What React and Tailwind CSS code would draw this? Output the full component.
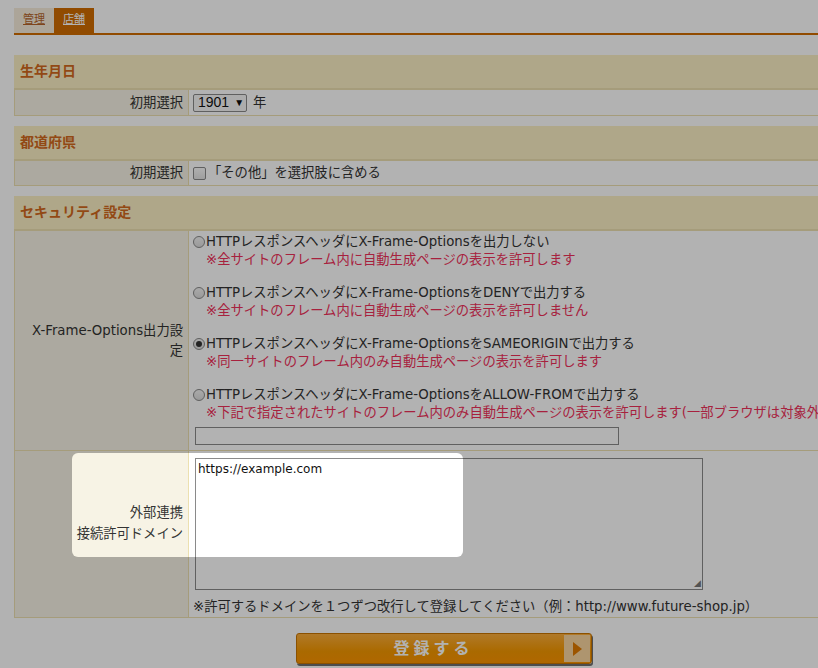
import React from "react";

const hatch =
  "bg-[conic-gradient(#efe9d6_25%,#fefcf4_0_50%,#efe9d6_0_75%,#fefcf4_0)] bg-[length:2px_2px]";

function Section({ title, children }) {
  return (
    <div className="mb-[10px]">
      <div className="h-[34px] bg-[#fbf0c4] border-b border-[#ece0b0] flex items-center pl-[6px] text-[14px] font-bold text-[#d2691e]">
        {title}
      </div>
      <table className="w-full border-collapse">
        <tbody>{children}</tbody>
      </table>
    </div>
  );
}

function Row({ label, children }) {
  return (
    <tr className="border border-[#ece0b0]">
      <th
        className={`w-[174px] ${hatch} border-r border-[#ece0b0] text-right font-normal align-middle pr-[5px] text-[#333]`}
      >
        {label}
      </th>
      <td className="align-top pl-[4px] text-[#333]">{children}</td>
    </tr>
  );
}

function Radio({ checked, text, note }) {
  return (
    <div className="mb-[15px]">
      <div className="flex items-center leading-[18px] whitespace-nowrap">
        <span className="w-[12px] h-[12px] rounded-full border border-[#8a8a8a] bg-[linear-gradient(#f4f4f4,#dcdcdc)] flex items-center justify-center mr-[1px]">
          {checked && <span className="w-[6px] h-[6px] rounded-full bg-[#333]" />}
        </span>
        <span>{text}</span>
      </div>
      <div className="pl-[13px] leading-[18px] text-[#f0305a] whitespace-nowrap">{note}</div>
    </div>
  );
}

export default function App() {
  return (
    <div
      className="relative w-[818px] h-[668px] overflow-hidden bg-white text-[13.3px] text-[#333]"
      style={{ fontFamily: '"DejaVu Sans", "Noto Sans CJK JP", sans-serif' }}
    >
      <div className="pt-[8px] pl-[14px] w-[1000px]">
        <div className="flex h-[25px]">
          <div className="w-[40px] bg-[#f6eddc] flex items-center justify-center text-[11px] text-[#b5642a] underline">
            管理
          </div>
          <div className="w-[40px] bg-[#d06c00] flex items-center justify-center text-[11px] text-white underline">
            店舗
          </div>
        </div>
        <div className="h-[2px] bg-[#d06c00]" />

        <div className="mt-[20px]">
          <Section title="生年月日">
            <Row label="初期選択">
              <div className="h-[25px] flex items-center">
                <div
                  className="h-[18px] w-[54px] border border-[#8a8a8a] rounded-[2px] bg-[#f7f7f7] flex items-center pl-[4px] text-[#111] text-[14px]"
                  style={{ fontFamily: '"Liberation Sans", sans-serif' }}
                >
                  1901 <span className="ml-[5px] text-[10px]">▼</span>
                </div>
                <span className="ml-[6px]">年</span>
              </div>
            </Row>
          </Section>

          <Section title="都道府県">
            <Row label="初期選択">
              <div className="h-[24px] flex items-center">
                <span className="w-[13px] h-[13px] border border-[#8a8a8a] rounded-[2px] bg-[linear-gradient(#fbfbfb,#e4e4e4)] mr-[2px]" />
                <span>「その他」を選択肢に含める</span>
              </div>
            </Row>
          </Section>

          <div>
            <div className="h-[34px] bg-[#fbf0c4] border-b border-[#ece0b0] flex items-center pl-[6px] text-[14px] font-bold text-[#d2691e]">
              セキュリティ設定
            </div>
            <table className="w-full border-collapse">
              <tbody>
                <Row label={<span className="leading-[20px] block">X-Frame-Options出力設<br />定</span>}>
                  <div className="h-[219px] pt-[2px]">
                    <Radio
                      text="HTTPレスポンスヘッダにX-Frame-Optionsを出力しない"
                      note="※全サイトのフレーム内に自動生成ページの表示を許可します"
                    />
                    <Radio
                      text="HTTPレスポンスヘッダにX-Frame-OptionsをDENYで出力する"
                      note="※全サイトのフレーム内に自動生成ページの表示を許可しません"
                    />
                    <Radio
                      checked
                      text="HTTPレスポンスヘッダにX-Frame-OptionsをSAMEORIGINで出力する"
                      note="※同一サイトのフレーム内のみ自動生成ページの表示を許可します"
                    />
                    <Radio
                      text="HTTPレスポンスヘッダにX-Frame-OptionsをALLOW-FROMで出力する"
                      note="※下記で指定されたサイトのフレーム内のみ自動生成ページの表示を許可します(一部ブラウザは対象外)"
                    />
                    <div className="-mt-[10px] ml-[2px] w-[424px] h-[18px] border border-[#8a8a8a] bg-white" />
                  </div>
                </Row>
                <Row
                  label={
                    <span className="block leading-[21px] pb-[22px]">
                      外部連携
                      <br />
                      接続許可ドメイン
                    </span>
                  }
                >
                  <div className="pt-[7px]">
                    <div className="ml-[2px] w-[508px] h-[132px] border border-[#8a8a8a] bg-white px-[2px] pt-[1px] text-[12px] text-[#111] relative">
                      https://example.com
                      <span className="absolute right-[1px] bottom-[1px] text-[9px] leading-none text-[#777]">◢</span>
                    </div>
                    <div className="mt-[7px] leading-[20px] whitespace-nowrap">
                      ※許可するドメインを１つずつ改行して登録してください（例：http://www.future-shop.jp）
                    </div>
                  </div>
                </Row>
              </tbody>
            </table>
          </div>

          <div className="mt-[15px] ml-[282px] w-[296px] h-[31px] rounded-[3px] border border-[#c87400] bg-[linear-gradient(#fcae3c,#f49800_60%,#fb9400)] shadow-[1px_2px_0_#6f6f6f] flex items-center">
            <div className="flex-1 text-center text-white font-bold text-[16px] tracking-[4px] pl-[6px]">
              登録する
            </div>
            <div className="w-[26px] h-[27px] mr-[1px] bg-[#f9d6a0] flex items-center justify-center">
              <span className="w-0 h-0 border-y-[7px] border-y-transparent border-l-[9px] border-l-[#e07a00]" />
            </div>
          </div>
        </div>
      </div>

      <div className="absolute left-[72px] top-[453px] w-[391px] h-[104px] rounded-[6px] shadow-[0_0_0_2000px_rgba(0,0,0,0.3)] pointer-events-none" />
    </div>
  );
}
